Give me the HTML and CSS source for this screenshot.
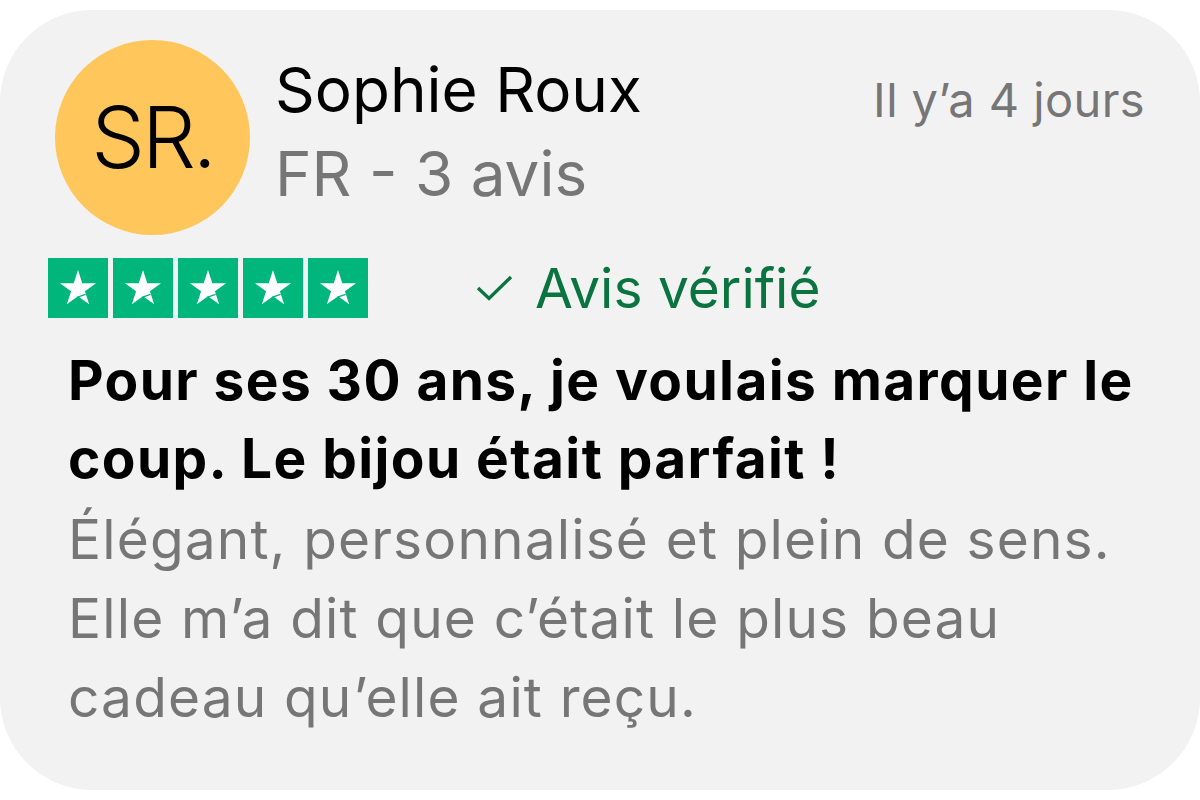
FILE: index.html
```html
<!DOCTYPE html>
<html>

<head>
  <title>Avis</title>
  <link rel="stylesheet" href="styles.css">
</head>

<body>
  <div class="card">
    <div class="header">
      <div class="avatar">SR.</div>
      <div class="who">
        <div class="name">Sophie Roux</div>
        <div class="meta">FR - 3 avis</div>
      </div>
      <div class="date">Il y’a 4 jours</div>
    </div>

    <div class="rating">
      <div class="stars">
        <svg class="star" viewBox="0 0 60 60"><path d="M30 12 L34.27 25.13 L48.07 25.13 L36.9 33.24 L41.17 46.37 L30 38.26 L18.83 46.37 L23.1 33.24 L11.93 25.13 L25.73 25.13 Z" fill="#fff"/><path d="M29.6 39.2 L37.6 36.4" stroke="#00b67a" stroke-width="1.3"/></svg>
        <svg class="star" viewBox="0 0 60 60"><path d="M30 12 L34.27 25.13 L48.07 25.13 L36.9 33.24 L41.17 46.37 L30 38.26 L18.83 46.37 L23.1 33.24 L11.93 25.13 L25.73 25.13 Z" fill="#fff"/><path d="M29.6 39.2 L37.6 36.4" stroke="#00b67a" stroke-width="1.3"/></svg>
        <svg class="star" viewBox="0 0 60 60"><path d="M30 12 L34.27 25.13 L48.07 25.13 L36.9 33.24 L41.17 46.37 L30 38.26 L18.83 46.37 L23.1 33.24 L11.93 25.13 L25.73 25.13 Z" fill="#fff"/><path d="M29.6 39.2 L37.6 36.4" stroke="#00b67a" stroke-width="1.3"/></svg>
        <svg class="star" viewBox="0 0 60 60"><path d="M30 12 L34.27 25.13 L48.07 25.13 L36.9 33.24 L41.17 46.37 L30 38.26 L18.83 46.37 L23.1 33.24 L11.93 25.13 L25.73 25.13 Z" fill="#fff"/><path d="M29.6 39.2 L37.6 36.4" stroke="#00b67a" stroke-width="1.3"/></svg>
        <svg class="star" viewBox="0 0 60 60"><path d="M30 12 L34.27 25.13 L48.07 25.13 L36.9 33.24 L41.17 46.37 L30 38.26 L18.83 46.37 L23.1 33.24 L11.93 25.13 L25.73 25.13 Z" fill="#fff"/><path d="M29.6 39.2 L37.6 36.4" stroke="#00b67a" stroke-width="1.3"/></svg>
      </div>
      <div class="verified">
        <svg class="check" viewBox="0 0 37 26"><polyline points="2,13 13,23.5 35,2" fill="none" stroke="#0a7440" stroke-width="3.4"/></svg>
        Avis vérifié
      </div>
    </div>

    <div class="review">
      <div class="title">Pour ses 30 ans, je voulais marquer le coup. Le bijou était parfait !</div>
      <div class="text">Élégant, personnalisé et plein de sens. Elle m’a dit que c’était le plus beau cadeau qu’elle ait reçu.</div>
    </div>
  </div>
</body>

</html>
```

FILE: styles.css
```css
body {
  margin: 0;
  padding: 0;
  background-color: #ffffff;
  font-family: Inter, "Noto Sans", Arial, sans-serif;
}

.card {
  margin-top: 10px;
  width: 1200px;
  height: 780px;
  box-sizing: border-box;
  padding-top: 30px;
  background-color: #f2f2f2;
  border-radius: 92px;
}

.header {
  display: flex;
  align-items: flex-start;
  padding: 0 55px 0 55px;
}

.avatar {
  width: 195px;
  height: 195px;
  border-radius: 50%;
  background-color: #fec65b;
  display: flex;
  justify-content: center;
  align-items: center;
  font-size: 85px;
  font-weight: 300;
  color: #000;
  letter-spacing: -3px;
  margin-right: 25px;
  flex-shrink: 0;
}

.who {
  margin-top: 8px;
}

.name,
.meta {
  font-size: 62px;
  line-height: 84px;
}

.name {
  color: #000;
}

.meta {
  color: #767676;
}

.date {
  margin-left: auto;
  margin-top: 32px;
  font-size: 47px;
  line-height: 56px;
  letter-spacing: 0.4px;
  color: #767676;
}

.rating {
  display: flex;
  align-items: center;
  margin-top: 23px;
  padding-left: 48px;
}

.stars {
  display: flex;
  gap: 5px;
}

.star {
  display: block;
  width: 60px;
  height: 60px;
  background-color: #00b67a;
}

.verified {
  display: flex;
  align-items: center;
  margin-left: 108px;
  font-size: 55px;
  line-height: 60px;
  color: #0a7440;
}

.check {
  width: 37px;
  height: 26px;
  margin-right: 22px;
}

.review {
  padding: 23px 40px 0 68px;
}

.title {
  font-size: 55px;
  line-height: 78px;
  font-weight: 700;
  letter-spacing: 1.4px;
  color: #000;
}

.text {
  margin-top: 3px;
  font-size: 55px;
  line-height: 79px;
  letter-spacing: 1.15px;
  color: #767676;
}
```
